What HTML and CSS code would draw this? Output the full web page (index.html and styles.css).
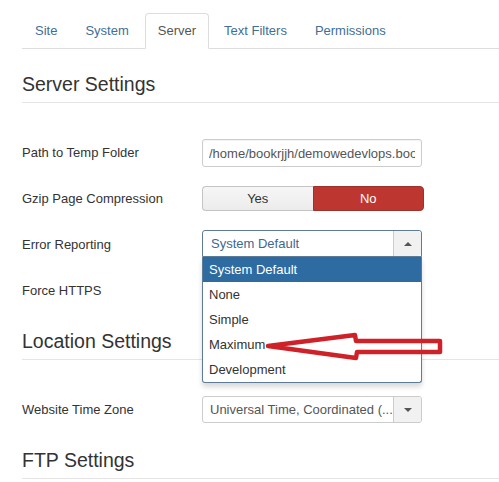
FILE: index.html
```html
<!DOCTYPE html>
<html>
<head>
<meta charset="utf-8">
<link rel="stylesheet" href="styles.css">
</head>
<body>
<div class="page">
  <ul class="tabs">
    <li class="tab">Site</li>
    <li class="tab">System</li>
    <li class="tab active">Server</li>
    <li class="tab">Text Filters</li>
    <li class="tab">Permissions</li>
  </ul>

  <h2 class="legend">Server Settings</h2>
  <div class="row">
    <label class="label">Path to Temp Folder</label>
    <div class="control"><input class="input" type="text" value="/home/bookrjjh/demowedevlops.bookrjjh.com/tmp"></div>
  </div>
  <div class="row">
    <label class="label">Gzip Page Compression</label>
    <div class="control">
      <div class="toggle"><span class="btn yes">Yes</span><span class="btn no">No</span></div>
    </div>
  </div>
  <div class="row">
    <label class="label">Error Reporting</label>
    <div class="control">
      <div class="select open">
        <span class="select-text">System Default</span>
        <span class="select-arrow"><span class="tri up"></span></span>
        <ul class="dropdown">
          <li class="item hl">System Default</li>
          <li class="item">None</li>
          <li class="item">Simple</li>
          <li class="item">Maximum</li>
          <li class="item">Development</li>
        </ul>
      </div>
    </div>
  </div>
  <div class="row">
    <label class="label">Force HTTPS</label>
    <div class="control"></div>
  </div>

  <h2 class="legend">Location Settings</h2>
  <div class="row">
    <label class="label">Website Time Zone</label>
    <div class="control">
      <div class="select">
        <span class="select-text plain">Universal Time, Coordinated (...</span>
        <span class="select-arrow"><span class="tri down"></span></span>
      </div>
    </div>
  </div>

  <h2 class="legend">FTP Settings</h2>

  <svg class="annot" width="499" height="482" viewBox="0 0 499 482">
    <polygon points="268,346 355,335 356,341 440,341 440,352 357,352 356,358" fill="none" stroke="#cf2128" stroke-width="4.5" stroke-linejoin="round"/>
  </svg>
</div>
</body>
</html>
```

FILE: styles.css
```css
* { box-sizing: border-box; }
html, body { margin: 0; padding: 0; background: #fff; }
body {
  font-family: "Liberation Sans", Arial, sans-serif;
  font-size: 13px;
  line-height: 18px;
  color: #333;
  overflow: hidden;
}
.page {
  position: relative;
  padding: 13px 0 0 22px;
  width: 499px;
  height: 482px;
}
.tabs {
  list-style: none;
  margin: 0 0 17px 0;
  padding: 0;
  display: flex;
  border-bottom: 1px solid #ddd;
}
.tab {
  padding: 8px 12px;
  line-height: 18px;
  border: 1px solid transparent;
  border-radius: 4px 4px 0 0;
  margin-right: 2px;
  margin-bottom: -1px;
  color: #3f6e99;
}
.tab.active {
  color: #555;
  background: #fff;
  border-color: #ddd #ddd transparent #ddd;
  margin-left: 1px;
}
.legend {
  margin: 0 0 36px 0;
  font-size: 19.5px;
  font-weight: normal;
  line-height: 36px;
  color: #333;
  border-bottom: 1px solid #e5e5e5;
}
.row {
  display: flex;
  height: 28px;
  margin-bottom: 18px;
}
.label {
  width: 180px;
  padding-top: 5px;
  line-height: 18px;
  color: #333;
}
.control {
  position: relative;
  width: 222px;
}
.input {
  display: block;
  width: 220px;
  height: 28px;
  padding: 4px 6px;
  border: 1px solid #ccc;
  border-radius: 3px;
  font-family: "Liberation Sans", Arial, sans-serif;
  font-size: 13px;
  color: #555;
  background: #fff;
  box-shadow: inset 0 1px 1px rgba(0,0,0,0.05);
}
.toggle {
  display: flex;
  margin-top: 1px;
  height: 25px;
  width: 222px;
}
.btn {
  flex: 1;
  text-align: center;
  line-height: 23px;
  font-size: 13px;
  border: 1px solid #c4c4c4;
}
.btn.yes {
  background: linear-gradient(#f6f6f6, #ececec);
  color: #333;
  border-radius: 4px 0 0 4px;
  border-right: none;
}
.btn.no {
  background: #bd362f;
  border-color: #a0302a;
  color: #fff;
  border-radius: 0 4px 4px 0;
}
.select {
  position: relative;
  display: flex;
  width: 220px;
  height: 27px;
  border: 1px solid #ccc;
  border-radius: 3px;
  background: #fff;
}
.select.open {
  margin-top: -1px;
  border-color: #5d7c97;
  border-radius: 3px 3px 0 0;
}
.select-text {
  flex: 1;
  padding-left: 8px;
  line-height: 25px;
  color: #3e6890;
  white-space: nowrap;
  overflow: hidden;
}
.select-text.plain { color: #555; padding-left: 7px; }
.select-arrow {
  width: 28px;
  border-left: 1px solid #ccc;
  background: #f1f1f1;
  display: flex;
  align-items: center;
  justify-content: center;
  border-radius: 0 3px 3px 0;
}
.tri {
  width: 0;
  height: 0;
  border-left: 4px solid transparent;
  border-right: 4px solid transparent;
}
.tri.up { border-bottom: 4px solid #555; }
.tri.down { border-top: 4px solid #555; }
.dropdown {
  position: absolute;
  left: -1px;
  top: 26px;
  width: 220px;
  margin: 0;
  padding: 0;
  list-style: none;
  background: #fff;
  border: 1px solid #5d7c97;
  border-top: none;
  border-radius: 0 0 3px 3px;
  box-shadow: 0 4px 5px rgba(0,0,0,0.15);
  z-index: 5;
}
.item {
  height: 25px;
  line-height: 25px;
  padding-left: 6px;
  color: #333;
}
.item.hl {
  background: #2d6ba1;
  color: #fff;
}
.annot {
  position: absolute;
  left: 0;
  top: 0;
  z-index: 10;
  pointer-events: none;
}
```
